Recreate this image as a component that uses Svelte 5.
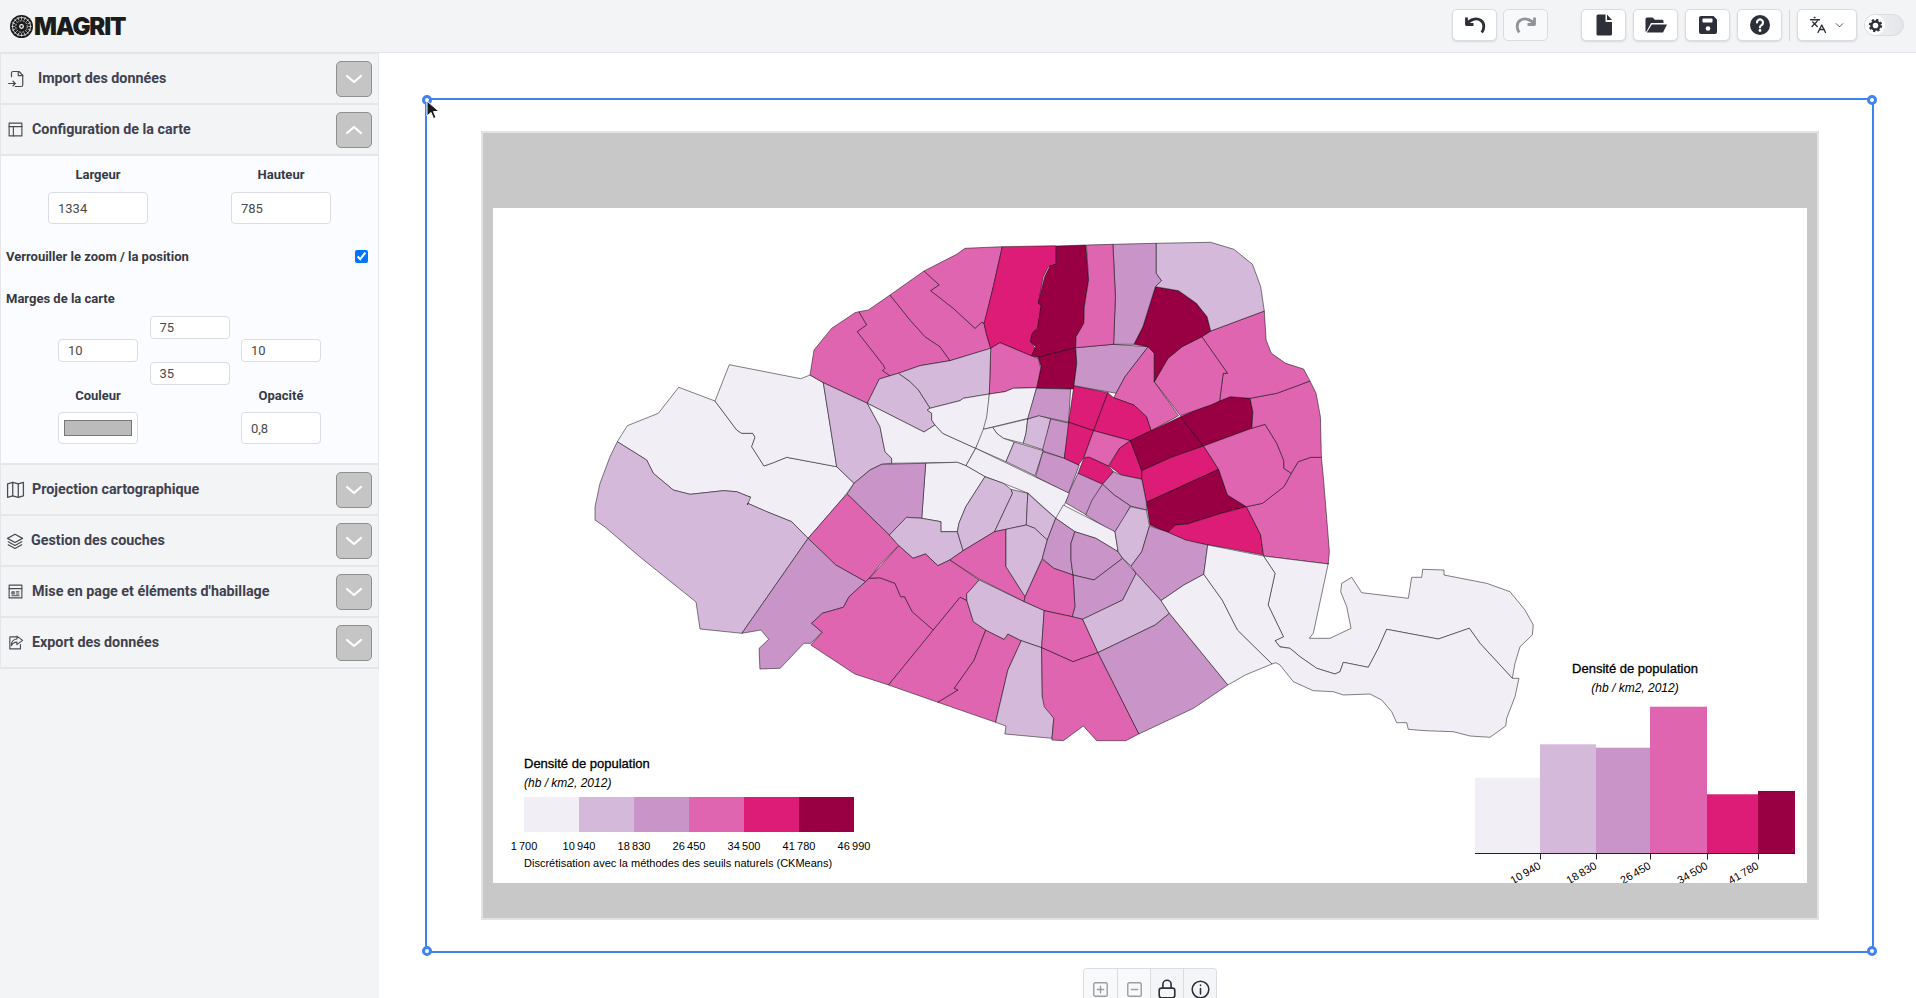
<script>
	const palette = ['#f1eef6', '#d4b9da', '#c994c7', '#df65b0', '#dd1c77', '#980043'];

	// traced against crops of the map: each letter switches to that crop's origin and scale
	const frames = {
		a: [560, 220, 3, 3],
		b: [1000, 220, 2.8, 3],
		c: [740, 480, 2.613, 3],
		d: [1280, 540, 3, 3],
		f: [0, 0, 1, 1]
	};

	function toPoints(src) {
		let fr = frames.f;
		const out = [];
		for (const tok of src.split(' ')) {
			if (frames[tok]) {
				fr = frames[tok];
				continue;
			}
			const [x, y] = tok.split(',').map(Number);
			out.push(`${(fr[0] + x / fr[2]).toFixed(1)},${(fr[1] + y / fr[3]).toFixed(1)}`);
		}
		return out.join(' ');
	}

	const regions = [
		[0, 'a 172,665 202,617 295,580 356,502 465,543 530,630 545,640 578,640 585,652 575,680 612,738 640,728 680,712 830,740 882,790 860,820 c 265,60 178,175 135,125 70,95 20,70 25,50 a 572,832 530,815 490,812 390,823 340,810 280,760 260,720'],
		[0, 'a 465,543 508,434 722,476 750,465 790,488 830,740 680,712 640,728 612,738 575,680 585,652 578,640 545,640 530,630'],
		[1, 'a 172,665 260,720 280,760 340,810 390,823 490,812 530,815 572,832 562,855 c 20,70 70,95 135,125 178,175 5,460 f 700,629 696,602 640,557 605,527 595,520 a 105,860 120,790 150,710'],
		[3, 'a 750,465 762,390 815,325 885,278 897,275 920,315 892,335 970,435 975,445 968,452 990,467 958,477 922,550 790,488'],
		[3, 'a 897,275 925,270 990,225 1050,300 1095,350 1140,380 1170,422 1080,437 1015,460 990,467 968,452 975,445 970,435 892,335 920,315'],
		[3, 'a 990,225 1092,153 1138,195 1112,212 1180,265 1245,325 1265,307 1272,310 1280,345 1292,385 1170,422 1140,380 1095,350 1050,300'],
		[3, 'a 1092,153 1190,103 1215,85 1327,80 1300,200 1275,310 1265,307 1245,325 1180,265 1112,212 1138,195'],
		[4, 'a 1327,80 1487,77 1487,133 1465,140 1450,170 1435,250 1445,255 1435,320 1425,330 1410,360 1425,385 1415,408 1320,368 1292,385 1280,345 1272,310 1300,200'],
		[5, 'b 157,78 240,75 248,180 236,260 235,310 213,350 212,383 107,412 88,408 100,380 85,365 90,340 105,325 115,255 107,250 125,170 140,137 157,133'],
		[5, 'b 107,412 212,383 215,430 207,507 102,505 115,440'],
		[3, 'a 1292,385 1320,368 1415,408 1435,415 1442,445 1430,503 1360,505 1335,515 1288,522'],
		[1, 'a 1292,385 1288,522 1210,535 1200,542 1110,565 1075,510 1050,485 1015,460 1080,437 1170,422'],
		[1, 'a 958,477 1015,460 1050,485 1075,510 1110,565 1102,570 1115,580 1115,600 1125,615 1092,636 922,550'],
		[1, 'a 790,488 922,550 960,620 975,695 995,715 995,730 965,733 930,750 882,790 830,740'],
		[0, 'a 922,550 1092,636 1125,615 1148,640 1170,650 1247,685 1218,737 1192,727 995,730 995,715 975,695 960,620'],
		[0, 'a 1110,565 1200,542 1210,535 1288,522 1288,560 1275,628 1247,685 1170,650 1148,640 1125,615 1115,600 1115,580 1102,570'],
		[0, 'a 1288,522 1335,515 1360,505 1430,503 1405,595 1270,628 1280,590'],
		[0, 'a 1298,622 1403,597 1398,640 1390,670 1330,655 1310,640'],
		[0, 'a 1270,628 1298,622 1310,640 1330,655 1363,666 1338,725 1247,685'],
		[1, 'a 1403,597 1437,586 1472,597 1452,690 1390,670 1398,640'],
		[2, 'a 1472,597 1530,610 1513,715 1447,692'],
		[1, 'a 1363,666 1450,692 1425,767 1338,725'],
		[2, 'b 120,695 180,715 222,735 192,820 100,770'],
		[2, 'b 102,505 198,507 192,607 108,587 77,597 90,550'],
		[4, 'b 207,497 302,518 262,632 192,607'],
		[4, 'b 192,607 262,632 235,712 220,735 180,715'],
		[2, 'b 212,383 315,373 415,380 350,470 325,520 207,497 215,430'],
		[3, 'b 415,380 432,400 432,485 500,587 423,632 410,590 375,555 318,533 325,520 350,470'],
		[4, 'b 302,518 318,533 375,555 410,590 423,632 365,662 262,632'],
		[3, 'b 262,632 365,662 335,685 303,738 250,712 235,712'],
		[4, 'b 250,712 303,738 318,755 287,793 218,760 235,714'],
		[4, 'b 365,662 397,752 397,778 340,765 305,738 335,685'],
		[5, 'b 365,662 423,632 505,590 570,678 480,712 397,752'],
		[5, 'b 505,590 560,565 590,555 640,530 700,535 708,575 705,625 570,678'],
		[4, 'b 397,752 480,712 570,678 612,748 410,847 397,778'],
		[5, 'b 410,847 612,748 637,825 690,860 620,880 525,912 490,915 470,938 420,915'],
		[4, 'b 470,938 490,915 525,912 620,880 690,860 730,945 738,1005 640,985 530,965'],
		[3, 'b 690,860 735,850 795,800 835,725 870,712 900,712 c 1525,0 1540,215 1537,252 1368,228 b 730,945'],
		[3, 'b 570,678 705,625 742,613 775,670 795,722 795,745 815,760 795,800 735,850 690,860 637,825 612,748'],
		[3, 'b 700,535 775,520 868,483 885,520 897,590 900,712 870,712 835,725 815,760 795,745 795,722 775,670 742,613 705,625 708,575'],
		[3, 'b 565,350 590,333 740,273 745,360 760,400 800,430 850,447 868,483 775,520 700,535 645,530 615,543 625,460 637,460'],
		[3, 'b 565,350 637,460 625,460 615,543 590,555 505,587 432,485 470,415 510,380'],
		[5, 'b 435,200 500,212 550,250 580,290 590,333 565,350 510,380 470,415 432,485 432,400 415,380 375,373 400,320'],
		[1, 'b 437,70 590,67 655,88 707,133 730,200 740,273 590,333 580,290 550,250 500,212 435,200 452,182 437,160'],
		[2, 'b 316,73 437,70 437,160 452,182 435,200 400,320 375,373 318,373 323,230'],
		[3, 'b 242,75 316,73 323,230 318,373 212,383 213,350 235,310 236,260 248,180'],
		[2, 'b 218,760 287,793 242,885 183,848 192,820'],
		[2, 'b 318,755 340,765 397,778 410,847 410,870 365,858 320,825 287,793'],
		[2, 'b 287,793 320,825 365,858 345,900 320,938 240,885 258,840'],
		[0, 'a 1247,685 1528,820 1515,850 1490,897 1460,870 1405,820 1330,790 1275,770 1218,737'],
		[0, 'c 845,75 980,155 988,215 930,175 875,155 825,115'],
		[0, 'a 1097,730 1192,727 1218,737 1275,770 c 590,80 572,130 568,155 525,155 525,125 475,115 a 1085,895'],
		[2, 'a 882,790 930,750 965,733 1097,730 c 475,115 435,112 390,165 280,42'],
		[3, 'c 280,42 390,165 415,197 365,255 338,295 328,305 250,255 178,175 265,60'],
		[1, 'c 390,165 435,112 475,115 525,125 525,155 568,155 583,212 548,240 517,257 485,222 452,235 415,197'],
		[1, 'c 572,130 590,80 640,-10 688,10 708,28 712,40 665,155 583,212 568,155'],
		[1, 'c 712,40 708,28 752,40 748,135 695,148 665,155'],
		[1, 'c 752,40 785,75 825,115 803,180 770,145 748,135'],
		[3, 'c 548,240 583,212 665,155 695,148 695,260 745,350 742,365 625,297'],
		[1, 'c 695,148 748,135 770,145 803,180 790,235 745,350 695,260'],
		[2, 'c 825,115 875,155 865,190 865,240 870,285 820,265 790,235 803,180'],
		[2, 'c 875,155 930,175 988,215 1000,235 925,300 870,285 865,240 865,190'],
		[2, 'c 870,285 925,300 1000,235 1035,280 1000,360 895,418 868,410 875,380'],
		[3, 'c 790,238 820,265 870,285 875,380 868,410 795,392 742,365 745,350'],
		[1, 'c 1020,80 1062,90 1070,138 1050,215 1022,258 1000,235 988,215 980,155'],
		[2, 'c 1070,138 1115,155 1165,180 1222,195 1212,283 1160,315 1100,362 1035,280 1022,258 1050,215'],
		[1, 'c 1035,280 1100,362 1122,400 1085,435 935,518 895,418 1000,360'],
		[2, 'c 1122,400 1275,615 1185,685 1042,762 935,518 1085,435'],
		[0, 'c 1100,362 1160,315 1212,283 1260,360 1300,450 1390,552 1320,585 1275,615 1122,400'],
		[0, 'c 1368,228 1537,252 d 145,70 100,280 88,295 150,295 213,265 200,200 182,155 185,130 215,112 245,158 345,170 385,175 395,112 425,112 428,88 492,90 492,105 620,130 690,155 735,210 760,255 757,285 720,320 705,370 697,415 600,310 568,265 475,297 320,268 295,325 265,382 190,367 180,395 165,402 110,385 60,350 30,325 0,320 c 1398,482 1420,470 1380,375 1398,280'],
		[0, 'c 1212,283 1222,195 1368,228 1398,280 1380,375 1420,470 1398,482 1411,501 d 30,325 60,350 110,385 165,402 180,395 190,367 265,382 295,325 320,268 475,297 568,265 600,310 697,415 717,415 705,470 680,535 677,558 630,592 570,588 520,575 435,572 385,568 380,548 350,548 335,515 305,480 270,462 190,465 160,455 100,452 40,425 0,375 c 1400,548 1390,552 1300,450 1260,360'],
		[2, 'c 5,460 178,175 250,255 328,305 285,350 270,382 215,400 187,430 215,457 185,490 167,490 105,565 52,567 50,505 75,478 55,450'],
		[3, 'c 328,305 338,295 365,293 405,310 420,350 430,350 450,395 505,450 388,615 300,582 185,495 215,457 187,430 215,400 270,382 285,350'],
		[3, 'c 338,295 415,197 452,235 485,222 517,257 548,240 625,300 592,342 593,362 575,352 505,450 450,395 430,350 420,350 405,310 365,293'],
		[3, 'c 388,615 505,450 575,352 593,362 610,425 642,450 612,540 560,625 570,630 517,667'],
		[3, 'c 642,450 690,478 700,462 735,482 700,570 668,727 517,667 570,630 560,625 612,540'],
		[1, 'c 625,300 742,365 795,392 788,503 735,482 700,462 690,478 642,450 610,425 593,362 592,342'],
		[3, 'c 795,392 868,410 895,418 935,518 870,545 788,503'],
		[1, 'c 735,482 788,503 790,650 820,715 815,775 692,762 695,738 668,727 700,570'],
		[3, 'c 788,503 870,545 935,518 1042,762 1008,782 932,782 897,738 845,782 815,780 820,715 795,680 790,650']
	].map(([cls, src]) => ({ fill: palette[cls], points: toPoints(src) }));

	const breaks = ['1\u202f700', '10\u202f940', '18\u202f830', '26\u202f450', '34\u202f500', '41\u202f780', '46\u202f990'];

	const bars = [
		{ x: 1475, w: 65, top: 777.7 },
		{ x: 1540, w: 56, top: 744.3 },
		{ x: 1596, w: 54, top: 747.7 },
		{ x: 1650, w: 57, top: 706.7 },
		{ x: 1707, w: 51, top: 794.3 },
		{ x: 1758, w: 37, top: 791 }
	];
	const ticks = [1540.5, 1596.5, 1650.5, 1707.5, 1758.5];

	// logo spokes
	const spokes = Array.from({ length: 16 }, (_, i) => i * 22.5);
</script>

{#snippet chevron(up)}
	<button class="toggle" aria-label="Déplier">
		<svg viewBox="0 0 24 24" width="24" height="24" fill="none" stroke="#fff" stroke-width="2.2" stroke-linecap="round" stroke-linejoin="round">
			<path d={up ? 'M5 15l7-6 7 6' : 'M5 9l7 6 7-6'} />
		</svg>
	</button>
{/snippet}

<div class="app">
	<header class="topbar">
		<div class="logo">
			<svg viewBox="0 0 24 24" width="23" height="23">
				<circle cx="12" cy="12" r="12" fill="#1c1c1c" />
				<circle cx="12" cy="12" r="9.5" fill="none" stroke="#f3f4f6" stroke-width=".8" />
				<circle cx="12" cy="12" r="6" fill="none" stroke="#f3f4f6" stroke-width=".8" stroke-dasharray="2 1.2" />
				{#each spokes as a}
					<path d="M12 1.5V5" stroke="#f3f4f6" stroke-width=".7" transform="rotate({a} 12 12)" />
				{/each}
				<circle cx="12" cy="12" r="2.5" fill="#f3f4f6" />
				<circle cx="12" cy="12" r="1.2" fill="#1c1c1c" />
			</svg>
			<span>MAGRIT</span>
		</div>
		<div class="actions">
			<button class="tool" aria-label="Annuler">
				<svg class="line" viewBox="0 0 24 24" width="24" height="24"><path d="M3.5 4.5v7h7" /><path d="M3.5 11.5C7 6 13.5 4.5 18 7.5c3.6 2.6 3.6 8 .8 12" /></svg>
			</button>
			<button class="tool off" aria-label="Rétablir">
				<svg class="line" viewBox="0 0 24 24" width="24" height="24"><path d="M20.5 4.5v7h-7" /><path d="M20.5 11.5C17 6 10.5 4.5 6 7.5c-3.6 2.6-3.6 8-.8 12" /></svg>
			</button>
			<button class="tool wide-gap" aria-label="Nouveau">
				<svg viewBox="0 0 24 24" width="24" height="24" fill="#2d3039"><path d="M4.5 3A1.5 1.5 0 0 1 6 1.5h7.5V9H20v12a1.5 1.5 0 0 1-1.5 1.5H6A1.5 1.5 0 0 1 4.5 21z" /><path d="M15 1.5 20 7h-5z" /></svg>
			</button>
			<button class="tool" aria-label="Ouvrir">
				<svg viewBox="0 0 24 24" width="24" height="24" fill="#2d3039"><path d="M1.5 6A1.5 1.5 0 0 1 3 4.5h5.5L11 6.800h7.500a1.500 1.500 0 0 1 1 1.500V10H7L2.500 18.500h-1z" /><path d="M7.800 11.500H23l-4 8H2.800z" /></svg>
			</button>
			<button class="tool" aria-label="Enregistrer">
				<svg viewBox="0 0 24 24" width="24" height="24"><path fill="#2d3039" d="M5 3h12.500L21 6.500V19a2 2 0 0 1-2 2H5a2 2 0 0 1-2-2V5a2 2 0 0 1 2-2z" /><rect x="6.500" y="5.500" width="10" height="4" rx=".8" fill="#fff" /><circle cx="12" cy="15.500" r="2.300" fill="#fff" /></svg>
			</button>
			<button class="tool" aria-label="Aide">
				<svg viewBox="0 0 24 24" width="24" height="24"><circle cx="12" cy="12" r="10" fill="#2d3039" /><path d="M9 9.500a3 3 0 1 1 4.500 2.600c-1 .6-1.500 1.100-1.500 2.200" fill="none" stroke="#fff" stroke-width="2.200" stroke-linecap="round" /><circle cx="12" cy="17.500" r="1.400" fill="#fff" /></svg>
			</button>
			<span class="sep"></span>
			<button class="tool lang" aria-label="Langue">
				<svg class="thin" viewBox="0 0 24 24" width="18" height="18"><path d="m5 8 6 6" /><path d="m4 14 6-6 2-3" /><path d="M2 5h12" /><path d="M7 2h1" /><path d="m22 22-5-10-5 10" /><path d="M14 18h6" /></svg>
				<svg class="thin" viewBox="0 0 24 24" width="11" height="11"><path d="m5 8 7 7 7-7" /></svg>
			</button>
			<span class="theme">
				<span class="knob">
					<svg viewBox="0 0 24 24" width="15" height="15"><circle cx="12" cy="12" r="6.500" fill="none" stroke="#2d3039" stroke-width="4" /><circle cx="12" cy="12" r="9" fill="none" stroke="#2d3039" stroke-width="3.500" stroke-dasharray="3.600 3.470" /></svg>
				</span>
			</span>
		</div>
	</header>

	<div class="workspace">
		<aside class="sidebar">
			<div class="row">
				<svg class="ico first" viewBox="0 0 24 24" width="18" height="18"><path d="M6 9V4a2 2 0 0 1 2-2h8l5 5v13a2 2 0 0 1-2 2h-8" /><path d="M15 2v5.500h6" /><path d="M2 18h9" /><path d="m8 15 3 3-3 3" /></svg>
				<span class="title">Import des données</span>
				{@render chevron(false)}
			</div>
			<div class="row">
				<svg class="ico" viewBox="0 0 24 24" width="17" height="17"><rect x="3" y="3" width="18" height="18" /><path d="M3 8h18" /><path d="M9 8v13" /></svg>
				<span class="title">Configuration de la carte</span>
				{@render chevron(true)}
			</div>
			<div class="config">
				<div class="pair">
					<label class="field">
						<span>Largeur</span>
						<input value="1334" />
					</label>
					<label class="field">
						<span>Hauteur</span>
						<input value="785" />
					</label>
				</div>
				<label class="lock">
					<span>Verrouiller le zoom / la position</span>
					<input type="checkbox" checked />
				</label>
				<div class="margins-title">Marges de la carte</div>
				<div class="margins">
					<input class="m-top" value="75" />
					<input class="m-left" value="10" />
					<input class="m-right" value="10" />
					<input class="m-bottom" value="35" />
				</div>
				<div class="pair last">
					<label class="field">
						<span>Couleur</span>
						<span class="colorbox"><i></i></span>
					</label>
					<label class="field">
						<span>Opacité</span>
						<input value="0,8" />
					</label>
				</div>
			</div>
			<div class="row">
				<svg class="ico map" viewBox="0 0 24 24" width="19" height="19"><path d="M2 5l6.500-2 7 2 6.500-2v17l-6.500 2-7-2L2 22z" /><path d="M8.500 3v17" /><path d="M15.500 5v17" /></svg>
				<span class="title">Projection cartographique</span>
				{@render chevron(false)}
			</div>
			<div class="row">
				<svg class="ico map" viewBox="0 0 24 24" width="18" height="18"><path d="M12 3 22 8.500 12 14 2 8.500z" /><path d="m3 13 9 5 9-5" /><path d="m3 17 9 5 9-5" /></svg>
				<span class="title">Gestion des couches</span>
				{@render chevron(false)}
			</div>
			<div class="row">
				<svg class="ico" viewBox="0 0 24 24" width="17" height="17"><rect x="3" y="3" width="18" height="18" /><path d="M3 8h18" /><path d="M7 12.500h3v3H7z" /><path d="M13 12.500h4" /><path d="M7 18h10" /><path d="M13 15.500h4" /></svg>
				<span class="title">Mise en page et éléments d'habillage</span>
				{@render chevron(false)}
			</div>
			<div class="row">
				<svg class="ico" viewBox="0 0 24 24" width="17" height="17"><path d="M13 4H4v17h15v-6" /><path d="M14 3l8 6-8 6v-3.500c-4 0-6 1.500-8 5 0-5 3-9 8-9.500z" /></svg>
				<span class="title">Export des données</span>
				{@render chevron(false)}
			</div>
		</aside>

		<main class="canvas">
			<div class="sheet">
				<svg viewBox="483 133 1334 785" width="1334" height="785">
					<defs>
						<clipPath id="inner"><rect x="493" y="208" width="1314" height="675" /></clipPath>
					</defs>
					<rect x="483" y="133" width="1334" height="785" fill="#c8c8c8" />
					<rect x="493" y="208" width="1314" height="675" fill="#fff" />
					<g clip-path="url(#inner)">
						<g class="regions">
							{#each regions as r}
								<polygon points={r.points} fill={r.fill} />
							{/each}
						</g>

						<text class="lg-title" x="524" y="768">Densité de population</text>
						<text class="lg-sub" x="524" y="787">(hb / km2, 2012)</text>
						{#each palette as color, i}
							<rect x={524 + i * 55} y="797" width="55" height="35" fill={color} />
						{/each}
						{#each breaks as label, i}
							<text class="lg-break" x={524 + i * 55} y="850" text-anchor="middle">{label}</text>
						{/each}
						<text class="lg-note" x="524" y="867">Discrétisation avec la méthodes des seuils naturels (CKMeans)</text>

						<text class="lg-title" x="1635" y="673" text-anchor="middle">Densité de population</text>
						<text class="lg-sub" x="1635" y="692" text-anchor="middle">(hb / km2, 2012)</text>
						{#each bars as bar, i}
							<rect x={bar.x} y={bar.top} width={bar.w} height={853.5 - bar.top} fill={palette[i]} />
						{/each}
						<path d="M1475 853.5H1795" stroke="#222" stroke-width="1" />
						{#each ticks as t, i}
							<path d="M{t} 853.5v6" stroke="#222" stroke-width="1" />
							<text class="lg-break" transform="translate({t + 1} 868) rotate(-30)" text-anchor="end">{breaks[i + 1]}</text>
						{/each}
					</g>
				</svg>
			</div>

			<div class="selection">
				<i class="h tl"></i><i class="h tr"></i><i class="h bl"></i><i class="h br"></i>
			</div>

			<svg class="cursor" viewBox="0 0 14 20" width="14" height="20">
				<path d="M1 1v15l4-3.500 2.500 6 2.500-1-2.500-6H13z" fill="#1a1a1a" stroke="#fff" stroke-width="1" />
			</svg>

			<div class="zoombar">
				<button class="cell dim" aria-label="Zoom avant">
					<svg class="line2" viewBox="0 0 24 24" width="19" height="19"><rect x="3.500" y="3.500" width="17" height="17" rx="2" /><path d="M12 8v8M8 12h8" /></svg>
				</button>
				<button class="cell dim" aria-label="Zoom arrière">
					<svg class="line2" viewBox="0 0 24 24" width="19" height="19"><rect x="3.500" y="3.500" width="17" height="17" rx="2" /><path d="M8 12h8" /></svg>
				</button>
				<button class="cell" aria-label="Verrou">
					<svg class="line2" viewBox="0 0 24 24" width="22" height="22"><rect x="3.500" y="11" width="17" height="10.500" rx="2.500" /><path d="M7.500 11V7a4.500 4.500 0 0 1 9 0v4" /></svg>
				</button>
				<button class="cell" aria-label="Informations">
					<svg class="line2" viewBox="0 0 24 24" width="21" height="21"><circle cx="12" cy="12" r="9.500" /><path d="M12 11v6" /><path d="M12 7v.5" /></svg>
				</button>
			</div>
		</main>
	</div>
</div>

<style>
	:global(body) {
		margin: 0;
		background: #fff;
		font-family: Roboto, "Liberation Sans", sans-serif;
		color: #363636;
	}

	.app {
		height: 100vh;
		display: flex;
		flex-direction: column;
		overflow: hidden;
	}

	.topbar {
		height: 52px;
		flex: none;
		display: flex;
		align-items: center;
		justify-content: space-between;
		background: #f3f4f6;
		border-bottom: 1px solid #e3e4e8;
		padding: 0 12px 0 10px;
	}

	.logo {
		display: flex;
		align-items: center;
		gap: 1px;
		font-family: Inter, sans-serif;
		font-size: 24px;
		font-weight: 900;
		letter-spacing: -1.2px;
		color: #1c1c1c;
	}

	.logo svg {
		display: block;
	}

	.actions {
		display: flex;
		align-items: center;
		gap: 7px;
		margin-top: -2px;
	}

	button {
		font: inherit;
		padding: 0;
		cursor: pointer;
	}

	.tool {
		width: 45px;
		height: 32px;
		background: #fff;
		border: 1px solid #dbdce2;
		border-radius: 5px;
		box-shadow: 0 1px 2px rgba(0, 0, 0, 0.12);
		display: flex;
		align-items: center;
		justify-content: center;
	}

	.tool.off {
		background: #f8f9fa;
		box-shadow: none;
		margin-left: -1px;
	}

	.tool.off svg {
		opacity: 0.5;
	}

	.wide-gap {
		margin-left: 26px;
	}

	.line {
		fill: none;
		stroke: #2d3039;
		stroke-width: 2.8;
		stroke-linejoin: round;
	}

	.thin {
		fill: none;
		stroke: #2d3039;
		stroke-width: 1.8;
		stroke-linecap: round;
		stroke-linejoin: round;
	}

	.sep {
		width: 1px;
		height: 31px;
		background: #d5d6da;
	}

	.tool.lang {
		width: 60px;
		gap: 7px;
	}

	.theme {
		width: 40px;
		height: 22px;
		box-sizing: border-box;
		border: 1px solid #dbdce2;
		border-radius: 11px;
		background: linear-gradient(90deg, #f3f4f6, #e4e5ea);
		display: flex;
		align-items: center;
	}

	.knob {
		width: 20px;
		height: 20px;
		border-radius: 50%;
		background: #fff;
		display: flex;
		align-items: center;
		justify-content: center;
	}

	.workspace {
		flex: 1;
		min-height: 0;
		display: flex;
	}

	.sidebar {
		width: 379px;
		flex: none;
		box-sizing: border-box;
		background: #f3f4f6;
		border-top: 1px solid #e5e6ea;
	}

	.row {
		height: 49px;
		display: flex;
		align-items: center;
		background: #f3f4f6;
		border: 1px solid #e5e6ea;
		border-width: 0 1px 2px;
		padding: 0 6px;
	}

	.ico {
		flex: none;
		margin-right: 8px;
		fill: none;
		stroke: #4a4c55;
		stroke-width: 1.6;
		stroke-linejoin: round;
		stroke-linecap: round;
	}

	.ico.first {
		margin-right: 13px;
	}

	.ico.map {
		margin-right: 7px;
		margin-left: -1px;
	}

	.title {
		flex: 1;
		font-size: 14.3px;
		font-weight: 700;
		color: #40424f;
		margin-top: -2px;
	}

	.toggle {
		width: 36px;
		height: 36px;
		flex: none;
		box-sizing: border-box;
		background: #c5c5c5;
		border: 1px solid #8f8f8f;
		border-radius: 5px;
		display: flex;
		align-items: center;
		justify-content: center;
		margin-top: 1px;
	}

	.config {
		background: #fbfcff;
		border: 1px solid #e5e6ea;
		border-width: 0 1px 2px;
		padding: 12px 0 19px;
		font-size: 13px;
		font-weight: 700;
		color: #363a45;
	}

	.pair {
		display: grid;
		grid-template-columns: 194px 172px;
	}

	.field {
		display: flex;
		flex-direction: column;
		align-items: center;
	}

	.field > span:first-child {
		line-height: 14px;
		margin-bottom: 10px;
	}

	input:not([type="checkbox"]) {
		box-sizing: border-box;
		width: 100px;
		height: 32px;
		padding: 0 9px;
		font: 400 13px Roboto, sans-serif;
		color: #4a4a4a;
		background: #fff;
		border: 1px solid #dbdce6;
		border-radius: 4px;
		outline: none;
	}

	.lock {
		height: 20px;
		margin-top: 22px;
		padding: 0 10px 2px 5px;
		display: flex;
		align-items: center;
		justify-content: space-between;
	}

	.lock input {
		width: 13px;
		height: 13px;
		margin: 1px 0 0;
	}

	.margins-title {
		margin: 24px 0 10px 5px;
		line-height: 14px;
	}

	.margins {
		display: grid;
		grid-template-columns: repeat(3, 80px);
		grid-template-rows: repeat(3, 23px);
		column-gap: 11.5px;
		padding-left: 57px;
	}

	.margins input {
		width: 80px;
		height: 23px;
	}

	.m-top { grid-area: 1 / 2; }
	.m-left { grid-area: 2 / 1; }
	.m-right { grid-area: 2 / 3; }
	.m-bottom { grid-area: 3 / 2; height: 24px; }

	.pair.last {
		margin-top: 4px;
	}

	.pair.last .field > span:first-child {
		margin-bottom: 9px;
	}

	.pair.last input {
		width: 80px;
	}

	.colorbox {
		box-sizing: border-box;
		width: 80px;
		height: 32px;
		padding: 7px 5px;
		background: #fff;
		border: 1px solid #dbdce6;
		border-radius: 4px;
		display: flex;
	}

	.colorbox i {
		flex: 1;
		background: #bbb;
		border: 1px solid #767676;
	}

	.canvas {
		flex: 1;
		position: relative;
		background: #fff;
	}

	.sheet {
		position: absolute;
		left: 104px;
		top: 80px;
		line-height: 0;
		outline: 2px solid #e3e3e3;
	}

	.regions polygon {
		stroke: #000;
		stroke-opacity: 0.55;
		stroke-width: 0.9;
		stroke-linejoin: round;
	}

	text {
		font-family: "Liberation Sans", Arial, sans-serif;
		fill: #000;
	}

	.lg-title {
		font-size: 13px;
		stroke: #000;
		stroke-width: 0.3;
	}

	.lg-sub {
		font-size: 12px;
		font-style: italic;
	}

	.lg-break,
	.lg-note {
		font-size: 11px;
	}

	.selection {
		position: absolute;
		left: 46px;
		top: 45px;
		width: 1445px;
		height: 851px;
		border: 2px solid #3f83f0;
	}

	.h {
		position: absolute;
		width: 4px;
		height: 4px;
		border: 3px solid #3f83f0;
		border-radius: 50%;
		background: #fff;
	}

	.tl { left: -5px; top: -5px; }
	.tr { right: -5px; top: -5px; }
	.bl { left: -5px; bottom: -5px; }
	.br { right: -5px; bottom: -5px; }

	.cursor {
		position: absolute;
		left: 47px;
		top: 47px;
	}

	.zoombar {
		position: absolute;
		left: 704px;
		top: 915px;
		display: flex;
		border: 1px solid #dbdce2;
		border-bottom: none;
		border-radius: 4px 4px 0 0;
		background: #f7f8f9;
		overflow: hidden;
	}

	.cell {
		width: 33px;
		height: 40px;
		background: #f4f5f7;
		border: none;
		border-left: 1px solid #dbdce2;
		display: flex;
		align-items: center;
		justify-content: center;
	}

	.cell:first-child {
		border-left: none;
	}

	.cell.dim {
		background: #f8f9fa;
	}

	.cell.dim svg {
		opacity: 0.45;
	}

	.line2 {
		fill: none;
		stroke: #2d3039;
		stroke-width: 1.8;
		stroke-linecap: round;
	}
</style>
